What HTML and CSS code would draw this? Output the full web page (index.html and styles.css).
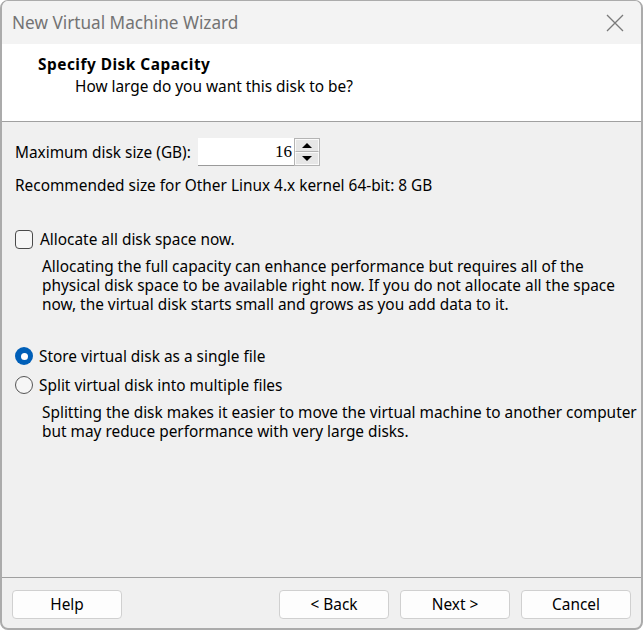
FILE: index.html
```html
<!DOCTYPE html>
<html lang="en">
<head>
    <meta charset="UTF-8">
    <title>New Virtual Machine Wizard</title>
    <link rel="stylesheet" href="styles.css">
</head>
<body>
    <div class="window">
        <div class="titlebar">
            <span class="title">New Virtual Machine Wizard</span>
            <svg class="close" width="18" height="18" viewBox="0 0 18 18">
                <path d="M1 1 L17 17 M17 1 L1 17" stroke="#7a7a7a" stroke-width="1.3" fill="none"/>
            </svg>
        </div>

        <!-- Page header -->
        <div class="header">
            <div class="header-title">Specify Disk Capacity</div>
            <div class="header-sub">How large do you want this disk to be?</div>
        </div>

        <div class="content">
            <div class="size-row">
                <label for="diskSize">Maximum disk size (GB):</label>
                <div class="spinner">
                    <input type="text" id="diskSize" value="16">
                    <div class="spin-buttons">
                        <div class="spin-btn"><span class="tri-up"></span></div>
                        <div class="spin-btn"><span class="tri-down"></span></div>
                    </div>
                </div>
            </div>

            <div class="recommended">Recommended size for Other Linux 4.x kernel 64-bit: 8 GB</div>

            <div class="option check-option">
                <span class="checkbox"></span>
                <span>Allocate all disk space now.</span>
            </div>
            <p class="note">Allocating the full capacity can enhance performance but requires all of the physical disk space to be available right now. If you do not allocate all the space now, the virtual disk starts small and grows as you add data to it.</p>

            <div class="option radio-option">
                <span class="radio checked"></span>
                <span>Store virtual disk as a single file</span>
            </div>
            <div class="option radio-option second">
                <span class="radio"></span>
                <span>Split virtual disk into multiple files</span>
            </div>
            <p class="note">Splitting the disk makes it easier to move the virtual machine to another computer but may reduce performance with very large disks.</p>
        </div>

        <div class="footer">
            <button class="btn">Help</button>
            <div class="spacer"></div>
            <button class="btn">&lt; Back</button>
            <button class="btn">Next &gt;</button>
            <button class="btn">Cancel</button>
        </div>
    </div>
</body>
</html>
```

FILE: styles.css
```css
* {
    margin: 0;
    padding: 0;
    box-sizing: border-box;
}

body {
    font-family: 'Noto Sans', 'Liberation Sans', sans-serif;
    font-size: 15.4px;
    color: #000;
    background: #ffffff;
}

.window {
    width: 643px;
    height: 630px;
    display: flex;
    flex-direction: column;
    background: #f0f0f0;
    border: 2px solid #ababab;
    border-top-width: 1px;
    border-radius: 8px;
    overflow: hidden;
}

.titlebar {
    height: 43px;
    display: flex;
    align-items: center;
    justify-content: space-between;
    padding: 0 17px 0 10px;
    background: #f3f3f3;
}

.title {
    font-size: 17.2px;
    color: #737373;
}

.close {
    display: block;
}

.header {
    height: 78px;
    background: #fff;
    border-bottom: 1px solid #a0a0a0;
    padding: 10px 0 0 36px;
    line-height: 22px;
}

.header-title {
    font-weight: bold;
    letter-spacing: 0.5px;
}

.header-sub {
    padding-left: 37px;
}

.content {
    flex: 1;
    padding: 16px 4px 0 13px;
}

.size-row {
    display: flex;
    align-items: center;
    height: 28px;
}

.size-row label {
    width: 183px;
}

.spinner {
    display: flex;
    height: 28px;
}

.spinner input {
    width: 96px;
    height: 28px;
    border: none;
    border-bottom: 1px solid #9a9a9a;
    background: #fff;
    text-align: right;
    padding-right: 2px;
    font-family: 'Liberation Serif', 'Times New Roman', serif;
    font-size: 17px;
    color: #000;
    outline: none;
}

.spin-buttons {
    display: flex;
    flex-direction: column;
    width: 26px;
    height: 28px;
    border: 1px solid #b4b4b4;
    background: #f0f0f0;
}

.spin-btn {
    flex: 1;
    display: flex;
    align-items: center;
    justify-content: center;
    background: #e6e6e6;
    border: 1px solid #fafafa;
    border-bottom-color: #b4b4b4;
}

.spin-btn + .spin-btn {
    border-bottom-color: #fafafa;
}

.tri-up {
    border-left: 5px solid transparent;
    border-right: 5px solid transparent;
    border-bottom: 5px solid #000;
}

.tri-down {
    border-left: 5px solid transparent;
    border-right: 5px solid transparent;
    border-top: 5px solid #000;
}

.recommended {
    margin-top: 10px;
    line-height: 20px;
}

.option {
    display: flex;
    align-items: center;
    height: 20px;
    gap: 7px;
}

.check-option {
    margin-top: 33px;
}

.checkbox {
    width: 18px;
    height: 19px;
    border: 1px solid #4a4a4a;
    border-radius: 4px;
    background: #f6f6f6;
}

.note {
    padding-left: 27px;
    margin-top: 8px;
    line-height: 19px;
}

.radio-option {
    margin-top: 32px;
    gap: 6px;
}

.radio-option.second {
    margin-top: 9px;
}

.radio {
    width: 18px;
    height: 18px;
    border: 1px solid #555;
    border-radius: 50%;
    background: #f6f6f6;
}

.radio.checked {
    border: none;
    background: #005fb8;
    display: flex;
    align-items: center;
    justify-content: center;
}

.radio.checked::after {
    content: "";
    width: 7px;
    height: 7px;
    border-radius: 50%;
    background: #fff;
}

.footer {
    display: flex;
    gap: 11px;
    border-top: 1px solid #a0a0a0;
    padding: 12px 10px 9px 10px;
}

.spacer {
    flex: 1;
}

.btn {
    width: 110px;
    height: 29px;
    background: #fdfdfd;
    border: 1px solid #d0d0d0;
    border-radius: 4px;
    font-family: 'Noto Sans', 'Liberation Sans', sans-serif;
    font-size: 15.4px;
    color: #000;
}
```
